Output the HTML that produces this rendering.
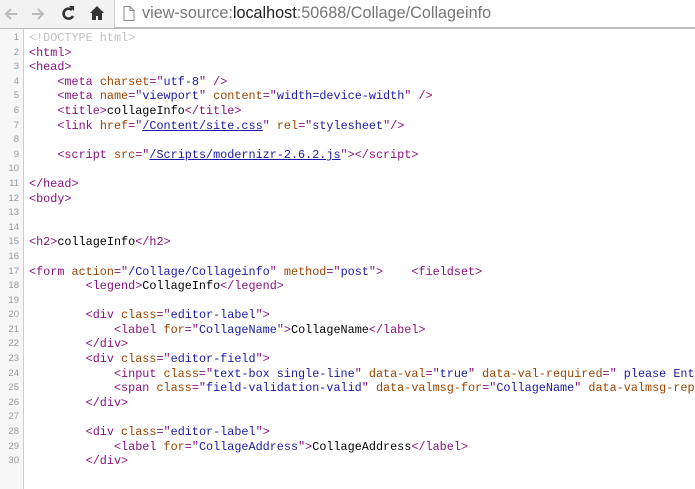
<!DOCTYPE html>
<html><head><meta charset="utf-8"><style>
*{margin:0;padding:0}
body{width:695px;height:480px;overflow:hidden;background:#fff;font-family:"Liberation Sans",sans-serif;position:relative}
.bar{position:absolute;left:0;top:0;width:695px;height:28px;background:#f2f2f2;border-bottom:1px solid #b8b8b8}
.omni{position:absolute;left:114px;top:0;right:-2px;height:27px;background:#fff;border-left:1px solid #ccc;border-bottom:1px solid #bbb}
.url{position:absolute;left:142px;top:4px;font-size:16.2px;color:#777;white-space:nowrap}
.url b{font-weight:normal;color:#222}
.code{position:absolute;left:0;top:31px;font-family:"Liberation Mono",monospace;font-size:11.8px;line-height:14.6px;white-space:pre;color:#000}
.gut{position:absolute;left:0;top:29px;width:23px;height:460px;background:#f7f7f7;border-right:1px solid #ccc}
.row{height:14.6px}
.n{display:inline-block;width:19px;text-align:right;color:#999;font-size:9.5px;font-family:"Liberation Sans",sans-serif;margin-right:10px;vertical-align:top}
.t{color:#881280}.a{color:#994500}.v{color:#1a1aa6}.d{color:#c0c0c0}
.l{color:#1a1aa6;text-decoration:underline}
</style></head><body>
<div class="bar">
<svg width="114" height="28" style="position:absolute;left:0;top:0">
<path d="M17 14H6M11 9l-5 5 5 5" stroke="#bbb" stroke-width="2" fill="none"/>
<path d="M32 14h11M38 9l5 5-5 5" stroke="#bbb" stroke-width="2" fill="none"/>
<path d="M72 10a5 5 0 1 0 1 6" stroke="#333" stroke-width="2.6" fill="none"/><path d="M69 6l5 0 0 5z" fill="#333"/>
<path d="M97 6l-7 7h2v7h4v-4h2v4h4v-7h2z" fill="#333"/>
</svg>
</div>
<div class="omni"></div>
<svg width="12" height="15" style="position:absolute;left:123px;top:6px"><path d="M1 .5h6l4 4v10H1z M7 .5v4h4" stroke="#888" fill="#fff"/></svg>
<div class="url">view-source:<b>localhost</b>:50688/Collage/Collageinfo</div>
<div class="gut"></div>
<div class="code"><div class="row"><span class="n">1</span><span class="d">&lt;!DOCTYPE html&gt;</span></div><div class="row"><span class="n">2</span><span class="t">&lt;html&gt;</span></div><div class="row"><span class="n">3</span><span class="t">&lt;head&gt;</span></div><div class="row"><span class="n">4</span>    <span class="t">&lt;meta <span class="a">charset</span>="<span class="v">utf-8</span>" /&gt;</span></div><div class="row"><span class="n">5</span>    <span class="t">&lt;meta <span class="a">name</span>="<span class="v">viewport</span>" <span class="a">content</span>="<span class="v">width=device-width</span>" /&gt;</span></div><div class="row"><span class="n">6</span>    <span class="t">&lt;title&gt;</span>collageInfo<span class="t">&lt;/title&gt;</span></div><div class="row"><span class="n">7</span>    <span class="t">&lt;link <span class="a">href</span>="<span class="l">/Content/site.css</span>" <span class="a">rel</span>="<span class="v">stylesheet</span>"/&gt;</span></div><div class="row"><span class="n">8</span></div><div class="row"><span class="n">9</span>    <span class="t">&lt;script <span class="a">src</span>="<span class="l">/Scripts/modernizr-2.6.2.js</span>"&gt;&lt;/script&gt;</span></div><div class="row"><span class="n">10</span></div><div class="row"><span class="n">11</span><span class="t">&lt;/head&gt;</span></div><div class="row"><span class="n">12</span><span class="t">&lt;body&gt;</span></div><div class="row"><span class="n">13</span></div><div class="row"><span class="n">14</span></div><div class="row"><span class="n">15</span><span class="t">&lt;h2&gt;</span>collageInfo<span class="t">&lt;/h2&gt;</span></div><div class="row"><span class="n">16</span></div><div class="row"><span class="n">17</span><span class="t">&lt;form <span class="a">action</span>="<span class="v">/Collage/Collageinfo</span>" <span class="a">method</span>="<span class="v">post</span>"&gt;</span>    <span class="t">&lt;fieldset&gt;</span></div><div class="row"><span class="n">18</span>        <span class="t">&lt;legend&gt;</span>CollageInfo<span class="t">&lt;/legend&gt;</span></div><div class="row"><span class="n">19</span></div><div class="row"><span class="n">20</span>        <span class="t">&lt;div <span class="a">class</span>="<span class="v">editor-label</span>"&gt;</span></div><div class="row"><span class="n">21</span>            <span class="t">&lt;label <span class="a">for</span>="<span class="v">CollageName</span>"&gt;</span>CollageName<span class="t">&lt;/label&gt;</span></div><div class="row"><span class="n">22</span>        <span class="t">&lt;/div&gt;</span></div><div class="row"><span class="n">23</span>        <span class="t">&lt;div <span class="a">class</span>="<span class="v">editor-field</span>"&gt;</span></div><div class="row"><span class="n">24</span>            <span class="t">&lt;input <span class="a">class</span>="<span class="v">text-box single-line</span>" <span class="a">data-val</span>="<span class="v">true</span>" <span class="a">data-val-required</span>="<span class="v"> please Enter</span></span></div><div class="row"><span class="n">25</span>            <span class="t">&lt;span <span class="a">class</span>="<span class="v">field-validation-valid</span>" <span class="a">data-valmsg-for</span>="<span class="v">CollageName</span>" <span class="a">data-valmsg-replace</span></span></div><div class="row"><span class="n">26</span>        <span class="t">&lt;/div&gt;</span></div><div class="row"><span class="n">27</span></div><div class="row"><span class="n">28</span>        <span class="t">&lt;div <span class="a">class</span>="<span class="v">editor-label</span>"&gt;</span></div><div class="row"><span class="n">29</span>            <span class="t">&lt;label <span class="a">for</span>="<span class="v">CollageAddress</span>"&gt;</span>CollageAddress<span class="t">&lt;/label&gt;</span></div><div class="row"><span class="n">30</span>        <span class="t">&lt;/div&gt;</span></div></div>
</body></html>
